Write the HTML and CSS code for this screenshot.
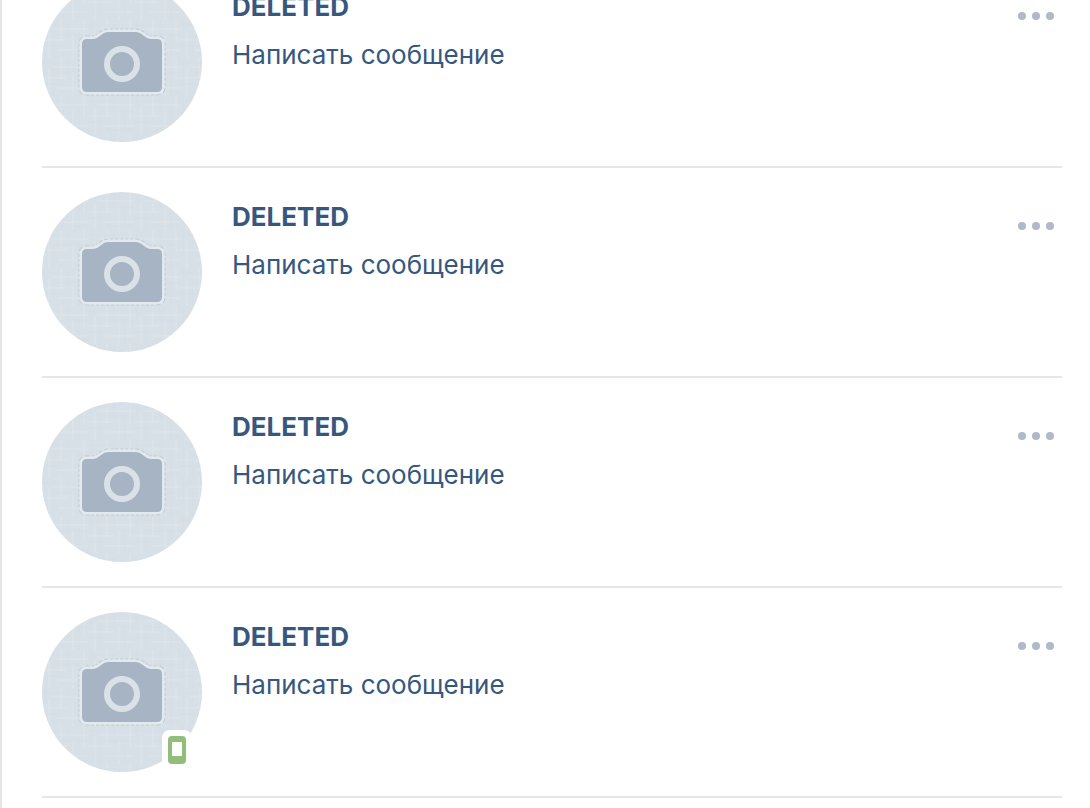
FILE: index.html
```
<!DOCTYPE html>
<html lang="ru">
<head>
    <meta charset="UTF-8">
    <meta name="viewport" content="width=device-width, initial-scale=1.0">
    <title>Друзья</title>
    <link rel="stylesheet" href="styles.css">
</head>
<body>
    <!-- Shared avatar placeholder -->
    <svg class="sprite" aria-hidden="true">
        <defs>
            <pattern id="linen" width="46" height="38" patternUnits="userSpaceOnUse">
                <path d="M3 0v24M12 9v29M26 0v17M37 12v26M0 5h28M14 15h32M0 26h22M19 34h27" stroke="#cbd8e1" stroke-opacity=".35" fill="none"/>
                <path d="M7 11v27M19 0v20M31 14v24M42 0v22M10 9h36M0 20h25M16 30h30" stroke="#e4e8ec" stroke-opacity=".4" fill="none"/>
            </pattern>
        </defs>
        <symbol id="camera" viewBox="0 0 160 160">
            <circle cx="80" cy="80" r="80" fill="#d8e0e7"/>
            <circle cx="80" cy="80" r="80" fill="url(#linen)"/>
            <path d="M45 57h5c8 0 9-7 17-7h26c8 0 9 7 17 7h5q5 0 5 5v43q0 5-5 5H45q-5 0-5-5V62q0-5 5-5z" fill="none" stroke="#c0cbd5" stroke-width="7" stroke-linejoin="round" stroke-dasharray="3 2"/>
            <path d="M45 57h5c8 0 9-7 17-7h26c8 0 9 7 17 7h5q5 0 5 5v43q0 5-5 5H45q-5 0-5-5V62q0-5 5-5z" fill="#a6b4c4" stroke="#e3eaef" stroke-width="5" stroke-linejoin="round" paint-order="stroke"/>
            <circle cx="80" cy="82" r="15" fill="#a6b4c4" stroke="#dae2e8" stroke-width="6"/>
        </symbol>
    </svg>

    <main class="friends">
        <ul class="friends-list">
            <li class="friend">
                <a class="friend-photo" href="#" aria-label="DELETED"><svg class="avatar"><use href="#camera"/></svg></a>
                <div class="friend-info">
                    <a class="friend-name" href="#">DELETED</a>
                    <a class="friend-message" href="#">Написать сообщение</a>
                </div>
                <button class="friend-menu" type="button" aria-label="Действия"><span></span><span></span><span></span></button>
            </li>
            <li class="friend">
                <a class="friend-photo" href="#" aria-label="DELETED"><svg class="avatar"><use href="#camera"/></svg></a>
                <div class="friend-info">
                    <a class="friend-name" href="#">DELETED</a>
                    <a class="friend-message" href="#">Написать сообщение</a>
                </div>
                <button class="friend-menu" type="button" aria-label="Действия"><span></span><span></span><span></span></button>
            </li>
            <li class="friend">
                <a class="friend-photo" href="#" aria-label="DELETED"><svg class="avatar"><use href="#camera"/></svg></a>
                <div class="friend-info">
                    <a class="friend-name" href="#">DELETED</a>
                    <a class="friend-message" href="#">Написать сообщение</a>
                </div>
                <button class="friend-menu" type="button" aria-label="Действия"><span></span><span></span><span></span></button>
            </li>
            <li class="friend">
                <a class="friend-photo" href="#" aria-label="DELETED">
                    <svg class="avatar"><use href="#camera"/></svg>
                    <span class="online-mobile"></span>
                </a>
                <div class="friend-info">
                    <a class="friend-name" href="#">DELETED</a>
                    <a class="friend-message" href="#">Написать сообщение</a>
                </div>
                <button class="friend-menu" type="button" aria-label="Действия"><span></span><span></span><span></span></button>
            </li>
        </ul>
    </main>
</body>
</html>
```
FILE: styles.css
```
:root {
    --link-color: #36587f;
    --border-color: #e5e6e8;
    --dots-color: #aebaca;
    --online-color: #93bd7a;
}

*,
*::before {
    box-sizing: border-box;
}

body {
    margin: 0;
    background: #fff;
    color: var(--link-color);
    font-family: Inter, sans-serif;
    font-size: 26px;
    line-height: 32px;
}

a {
    color: inherit;
    text-decoration: none;
}

.sprite {
    position: absolute;
    width: 0;
    height: 0;
}

.friends {
    min-height: 100vh;
    padding: 0 28px 0 40px;
    border-left: 2px solid var(--border-color);
    overflow: hidden;
}

/* The first row is scrolled partly out of view */
.friends-list {
    list-style: none;
    margin: -42px 0 0;
    padding: 0;
}

.friend {
    display: flex;
    align-items: flex-start;
    gap: 30px;
    padding: 24px 0;
    border-bottom: 2px solid var(--border-color);
}

.friend-photo {
    position: relative;
    flex: none;
}

.avatar {
    display: block;
    width: 160px;
    height: 160px;
}

/* Phone badge over the avatar */
.online-mobile {
    position: absolute;
    right: 10px;
    bottom: 2px;
    width: 30px;
    height: 40px;
    border: 6px solid #fff;
    border-radius: 8px;
    background: #fff;
}

.online-mobile::before {
    content: "";
    display: block;
    width: 18px;
    height: 28px;
    border: solid var(--online-color);
    border-width: 6px 4px 8px;
    border-radius: 4px;
}

.friend-info {
    flex: 1;
    display: flex;
    flex-direction: column;
    align-items: flex-start;
    gap: 16px;
    padding-top: 9px;
}

.friend-name {
    font-weight: 700;
}

.friend-menu {
    display: flex;
    gap: 6px;
    margin-top: 22px;
    padding: 8px;
    border: 0;
    background: none;
    cursor: pointer;
}

.friend-menu span {
    width: 8px;
    height: 8px;
    border-radius: 50%;
    background: var(--dots-color);
}
```
